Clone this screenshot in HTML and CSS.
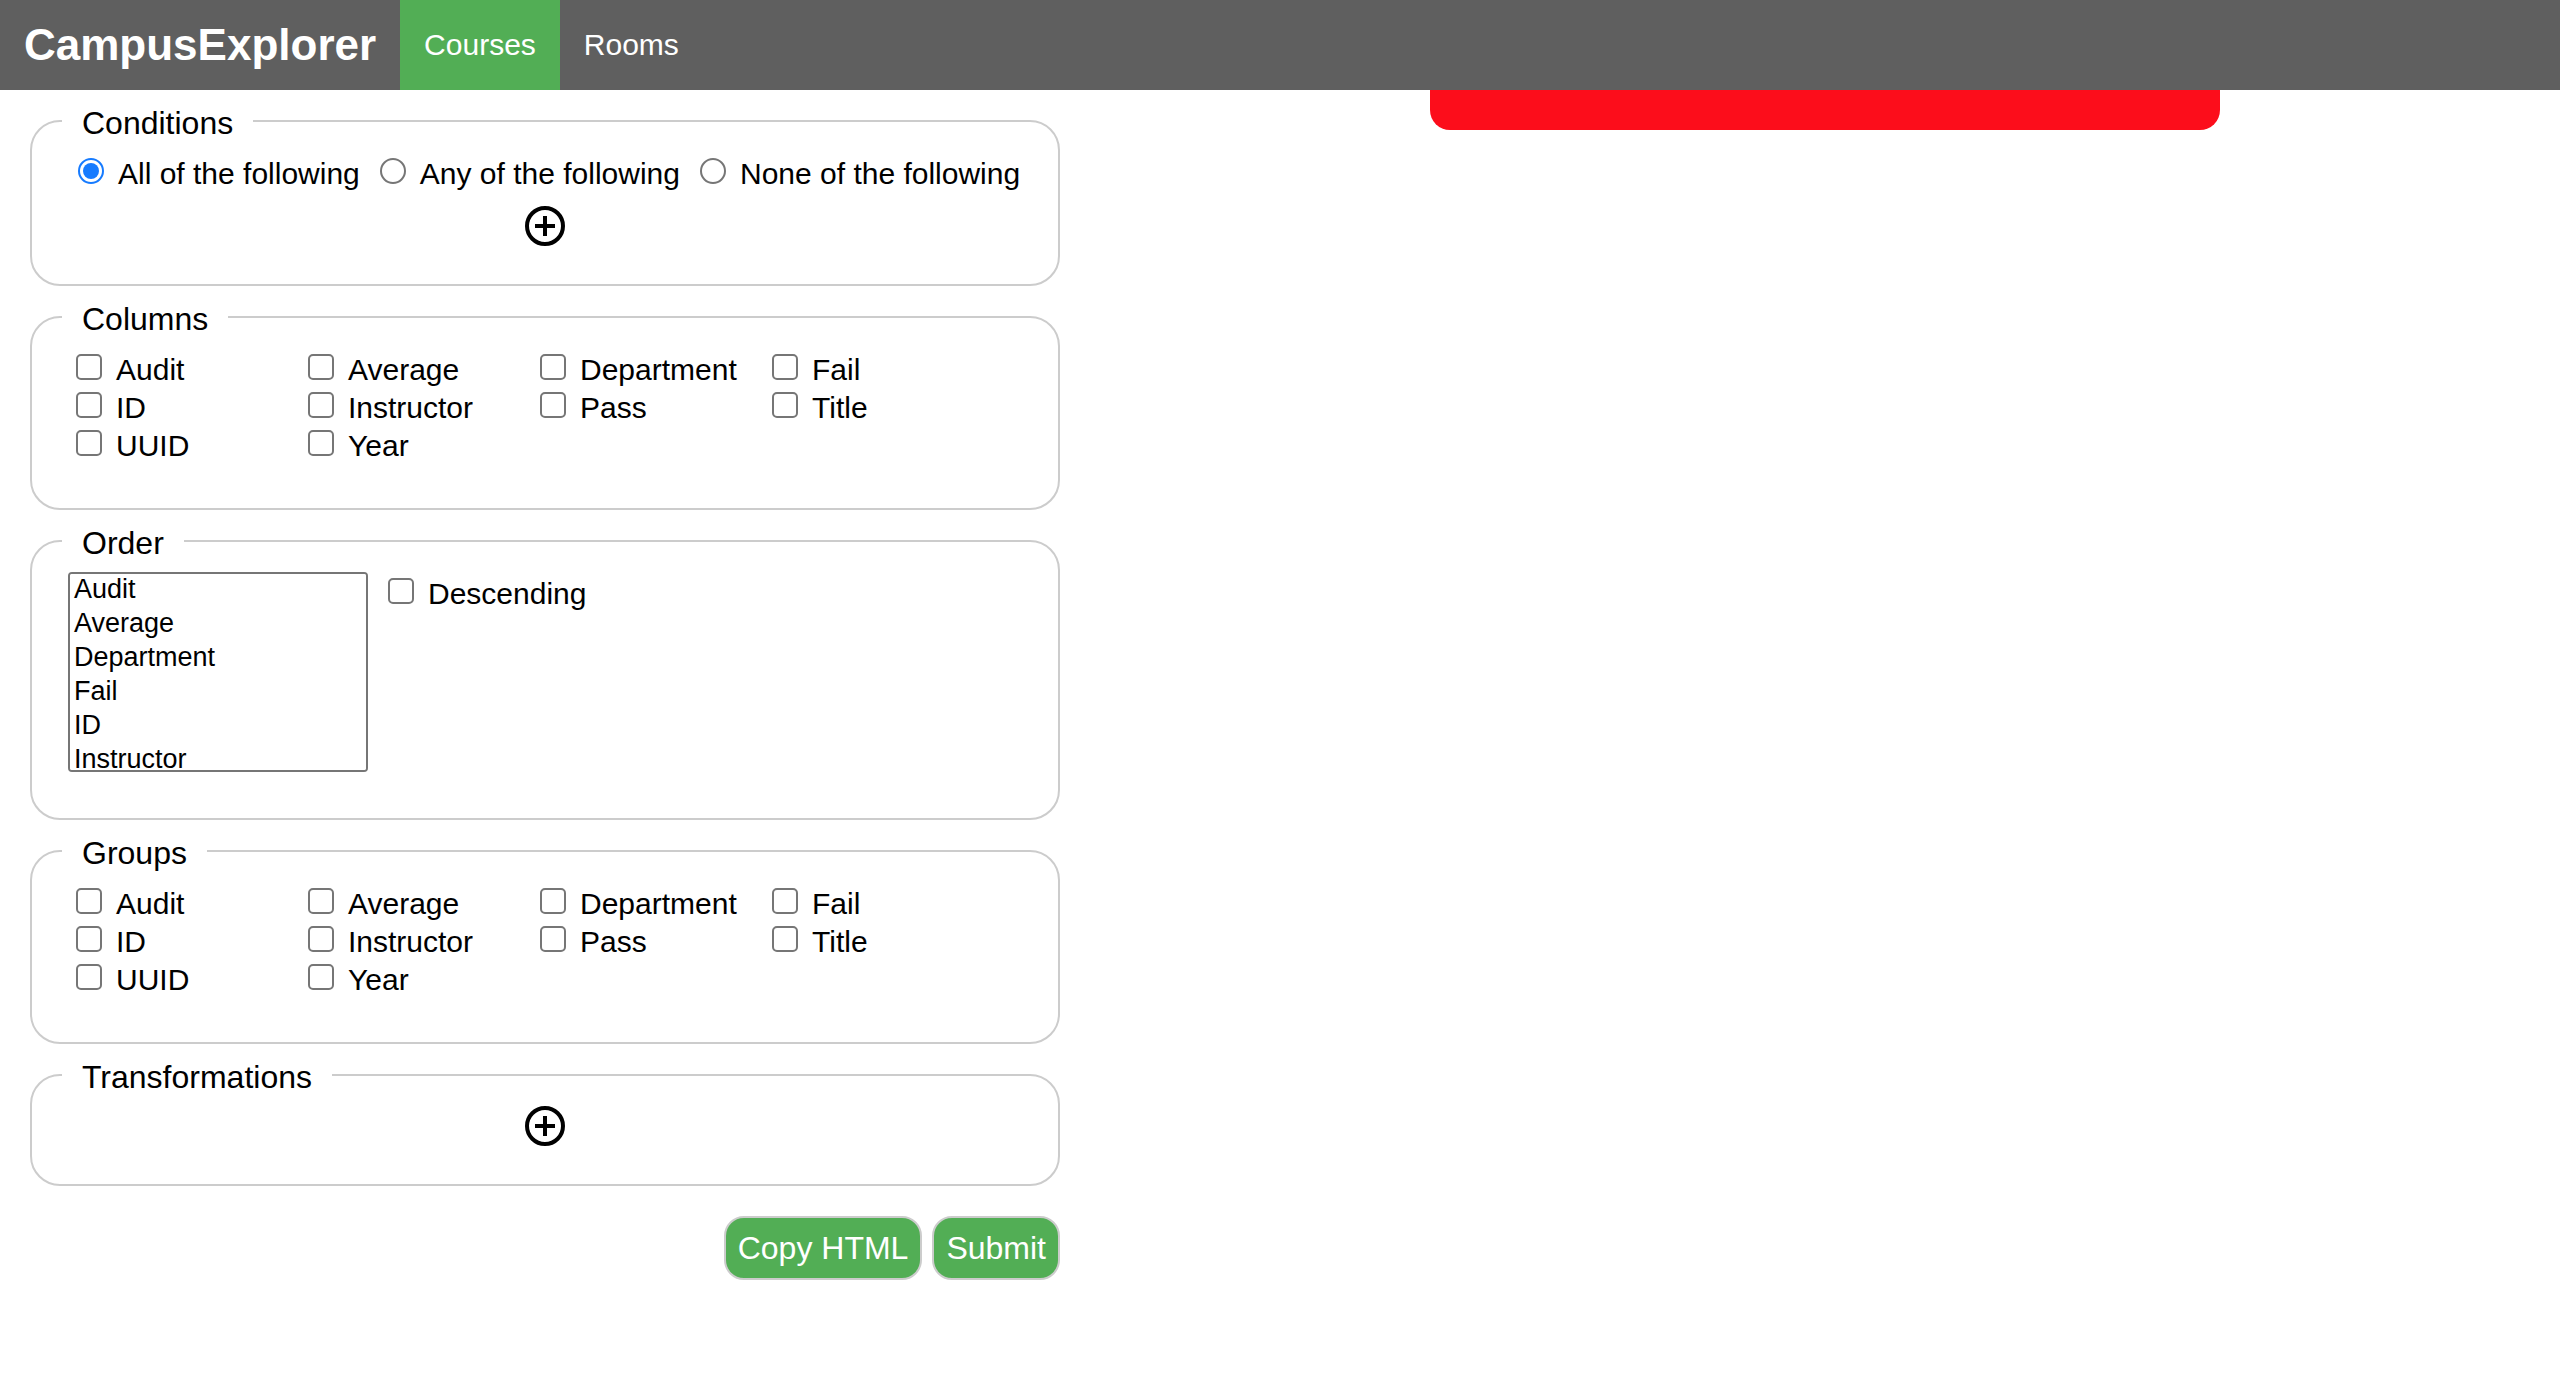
FILE: index.html
```html
<!DOCTYPE html>
<html lang="en">
<head>
  <meta charset="utf-8">
  <title>CampusExplorer</title>
  <link rel="stylesheet" href="styles.css">
</head>
<body>
  <nav class="nav">
    <h1 class="nav-brand">CampusExplorer</h1>
    <a class="nav-item active" href="#courses">Courses</a>
    <a class="nav-item" href="#rooms">Rooms</a>
  </nav>
  <main class="layout">
    <form class="query">
      <fieldset class="group">
        <legend>Conditions</legend>
        <div class="body">
          <div class="radios">
            <label class="choice"><input type="radio" name="condition" checked>All of the following</label>
            <label class="choice"><input type="radio" name="condition">Any of the following</label>
            <label class="choice"><input type="radio" name="condition">None of the following</label>
          </div>
          <button class="add" type="button" aria-label="Add condition">
            <svg viewBox="0 0 40 40" width="40" height="40" fill="none" stroke="#000" stroke-width="4"><circle cx="20" cy="20" r="18"/><path d="M10 20H30M20 10V30"/></svg>
          </button>
        </div>
      </fieldset>

      <fieldset class="group">
        <legend>Columns</legend>
        <div class="fields">
          <label class="choice"><input type="checkbox">Audit</label>
          <label class="choice"><input type="checkbox">Average</label>
          <label class="choice"><input type="checkbox">Department</label>
          <label class="choice"><input type="checkbox">Fail</label>
          <label class="choice"><input type="checkbox">ID</label>
          <label class="choice"><input type="checkbox">Instructor</label>
          <label class="choice"><input type="checkbox">Pass</label>
          <label class="choice"><input type="checkbox">Title</label>
          <label class="choice"><input type="checkbox">UUID</label>
          <label class="choice"><input type="checkbox">Year</label>
        </div>
      </fieldset>

      <fieldset class="group">
        <legend>Order</legend>
        <div class="order">
          <select class="order-fields" multiple aria-label="Order">
            <option>Audit</option>
            <option>Average</option>
            <option>Department</option>
            <option>Fail</option>
            <option>ID</option>
            <option>Instructor</option>
            <option>Pass</option>
            <option>Title</option>
            <option>UUID</option>
            <option>Year</option>
          </select>
          <label class="choice"><input type="checkbox">Descending</label>
        </div>
      </fieldset>

      <fieldset class="group">
        <legend>Groups</legend>
        <div class="fields">
          <label class="choice"><input type="checkbox">Audit</label>
          <label class="choice"><input type="checkbox">Average</label>
          <label class="choice"><input type="checkbox">Department</label>
          <label class="choice"><input type="checkbox">Fail</label>
          <label class="choice"><input type="checkbox">ID</label>
          <label class="choice"><input type="checkbox">Instructor</label>
          <label class="choice"><input type="checkbox">Pass</label>
          <label class="choice"><input type="checkbox">Title</label>
          <label class="choice"><input type="checkbox">UUID</label>
          <label class="choice"><input type="checkbox">Year</label>
        </div>
      </fieldset>

      <fieldset class="group">
        <legend>Transformations</legend>
        <div class="body">
          <button class="add" type="button" aria-label="Add transformation">
            <svg viewBox="0 0 40 40" width="40" height="40" fill="none" stroke="#000" stroke-width="4"><circle cx="20" cy="20" r="18"/><path d="M10 20H30M20 10V30"/></svg>
          </button>
        </div>
      </fieldset>

      <div class="actions">
        <button class="action" type="button">Copy HTML</button>
        <button class="action" type="submit">Submit</button>
      </div>
    </form>
    <section class="results">
      <div class="alert" role="alert"></div>
    </section>
  </main>
</body>
</html>
```
FILE: styles.css
```css
* {
  box-sizing: border-box;
}

body {
  margin: 0;
  background: #fff;
  color: #000;
  font: 30px/38px "Liberation Sans", Arial, Helvetica, sans-serif;
}

button,
select {
  font-family: inherit;
}

/* Navigation */
.nav {
  display: flex;
  align-items: stretch;
  background: #5f5f5f;
  color: #fff;
  line-height: 90px;
}

.nav-brand {
  margin: 0;
  padding: 0 24px;
  font-size: 44px;
  font-weight: bold;
}

.nav-item {
  padding: 0 24px;
  color: inherit;
  text-decoration: none;
}

.nav-item.active {
  background: #52ae55;
}

/* Page columns */
.layout {
  display: grid;
  grid-template-columns: minmax(0, 1090px) minmax(0, 1fr);
}

.query {
  display: flex;
  flex-direction: column;
  gap: 10px;
  padding: 10px 30px;
}

/* Query groups */
.group {
  min-width: 0;
  margin: 0;
  padding: 10px 30px 38px;
  border: 2px solid #ccc;
  border-radius: 30px;
}

.group legend {
  padding: 5px 20px 0;
  font-size: 32px;
  line-height: 37px;
}

.body {
  display: flex;
  flex-direction: column;
  align-items: center;
  gap: 8px;
}

.radios {
  display: flex;
  flex-wrap: wrap;
  align-self: stretch;
  gap: 0 20px;
  margin: 3px 0 5px;
  padding-left: 16px;
}

.fields {
  display: grid;
  grid-template-columns: repeat(4, 232px);
  margin: 3px 0 5px;
  padding-left: 14px;
}

.choice {
  display: flex;
  align-items: baseline;
  gap: 14px;
  white-space: nowrap;
}

.choice input {
  appearance: none;
  flex: none;
  width: 26px;
  height: 26px;
  margin: 0;
  border: 2px solid #767676;
  border-radius: 5px;
  background: #fff;
}

.choice input[type="radio"] {
  border-radius: 50%;
}

.choice input:checked {
  padding: 3px;
  border-color: #167bff;
  background: #167bff content-box;
}

.order {
  display: flex;
  align-items: flex-start;
  gap: 20px;
  padding: 0 6px 8px;
}

.order .choice {
  margin-top: 3px;
}

.order-fields {
  width: 300px;
  height: 200px;
  padding: 0;
  border: 2px solid #767676;
  border-radius: 4px;
  background: #fff;
  color: #000;
  font-size: 27px;
  scrollbar-width: none;
}

.order-fields option {
  min-height: 34px;
  padding: 0 4px 2px;
  line-height: 32px;
}

/* Buttons */
.add {
  display: flex;
  padding: 0;
  border: 0;
  background: none;
}

.actions {
  display: flex;
  justify-content: flex-end;
  gap: 10px;
  margin-top: 20px;
}

.action {
  height: 64px;
  padding: 0 12px;
  border: 2px solid #ccc;
  border-radius: 20px;
  background: #52ae55;
  color: #fff;
  font-size: 32px;
}

/* Results */
.results {
  display: flex;
  justify-content: center;
  align-items: flex-start;
}

.alert {
  width: 100%;
  max-width: 790px;
  padding: 20px;
  border-radius: 0 0 20px 20px;
  background: #fc0d1b;
}
```
